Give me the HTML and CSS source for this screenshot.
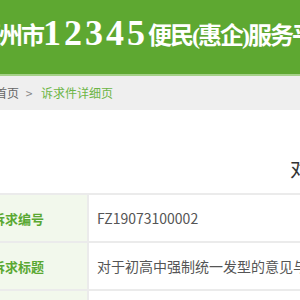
FILE: index.html
```html
<!DOCTYPE html>
<html lang="zh-CN">
<head>
  <meta charset="UTF-8" />
  <meta name="viewport" content="width=device-width, initial-scale=1.0" />
  <title>诉求件详细页</title>
  <link rel="stylesheet" href="styles.css">
</head>
<body>
  <header class="top">
    <h1 class="site-title">福州市<span class="num">12345</span>便民(惠企)服务平台</h1>
  </header>

  <div class="crumb">
    <a href="#" class="crumb-home">首页</a>
    <span class="crumb-sep">&gt;</span>
    <span class="crumb-current">诉求件详细页</span>
  </div>

  <main class="detail">
    <h2 class="detail-title">对于初高中强制统一发型的意见与建议</h2>
    <table class="info">
      <tr>
        <th>诉求编号</th>
        <td>FZ19073100002</td>
      </tr>
      <tr>
        <th>诉求标题</th>
        <td>对于初高中强制统一发型的意见与建议</td>
      </tr>
      <tr>
        <th>诉求类型</th>
        <td>建议</td>
      </tr>
    </table>
  </main>
</body>
</html>
```

FILE: styles.css
```css
* {
  box-sizing: border-box;
}

html, body {
  overflow: hidden;
}

body {
  margin: 0;
  font-family: "Noto Sans CJK SC", "Noto Sans", sans-serif;
  color: #333;
  background: #fff;
}

.top {
  background: #5ea831;
  height: 76px;
  border-bottom: 2px solid #a5d189;
}

.site-title {
  margin: 0 0 0 -23px;
  line-height: 66px;
  font-size: 24px;
  font-weight: bold;
  letter-spacing: -2px;
  color: #fff;
  white-space: nowrap;
  font-family: "Liberation Serif", "Noto Sans CJK SC", serif;
}

.site-title .num {
  font-size: 36px;
  letter-spacing: 3px;
  vertical-align: -1px;
}

.crumb {
  background: #efefef;
  height: 34px;
  line-height: 34px;
  font-size: 12px;
  margin-left: -5px;
  white-space: nowrap;
}

.crumb-home {
  color: #666;
  text-decoration: none;
}

.crumb-sep {
  color: #888;
  margin: 0 6px 0 4px;
}

.crumb-current {
  color: #6cb545;
}

.detail {
  white-space: nowrap;
}

.detail-title {
  margin: 44px 0 0;
  padding-left: 290px;
  line-height: 30px;
  font-size: 20px;
  font-weight: normal;
  color: #333;
}

.info {
  margin: 9px 0 0 -53px;
  border-collapse: collapse;
  width: 700px;
}

.info th,
.info td {
  border: 2px solid #ebebeb;
  height: 48px;
  padding: 0;
  text-align: left;
}

.info th {
  width: 140px;
  background: #f2f8ec;
  color: #5aa832;
  font-size: 13px;
  text-align: center;
}

.info td {
  padding-left: 8px;
  font-size: 14px;
  color: #555;
}
```
